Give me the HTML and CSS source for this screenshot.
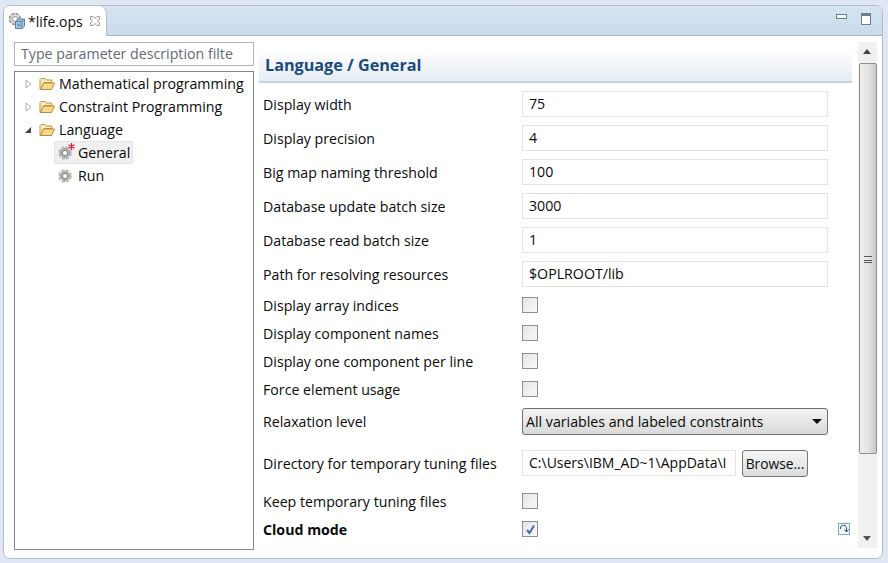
FILE: index.html
```html
<!DOCTYPE html>
<html>
<head>
    <title>life.ops</title>
    <link rel="stylesheet" href="styles.css">
</head>
<body>
    <svg class="defs" width="0" height="0">
        <symbol id="folder" viewBox="0 0 16 14">
            <path d="M1 12.500V2.500L2 1.500H6L7.500 3H12.500L13 4V5.500H5L1.500 12.500Z" fill="#fbeabd" stroke="#c09545"/>
            <path d="M1.500 12.500L4.500 6H15.500L12.500 12.500Z" fill="#f8d88f" stroke="#bd8a35"/>
        </symbol>
        <symbol id="gear" viewBox="0 0 16 16">
            <circle cx="8" cy="8" r="5.900" fill="none" stroke="#b4b4b4" stroke-width="1.600" stroke-dasharray="3.400 1.230"/>
            <circle cx="8" cy="8" r="4.300" fill="#bcbcbc" stroke="#888"/>
            <circle cx="8" cy="8" r="2.600" fill="#fff" stroke="#858585"/>
        </symbol>
        <symbol id="triangle-right" viewBox="0 0 7 10">
            <path d="M1 1L6 5L1 9Z" fill="#fff" stroke="#b0b0b0"/>
        </symbol>
    </svg>

    <div class="window">
        <div class="tabbar">
            <div class="tab">
                <svg class="tab-icon" width="18" height="18" viewBox="0 0 18 18">
                    <circle cx="7" cy="7" r="5.500" fill="#d8d8d8" stroke="#8f8f8f" stroke-width="1.500" stroke-dasharray="3 1.300"/>
                    <circle cx="7" cy="7" r="2.500" fill="#fff" stroke="#999"/>
                    <path d="M7.500 9.500L10 7H16.500V14L14 16.500H7.500Z" fill="#a9c7e4" stroke="#5b7fa6"/>
                    <path d="M7.500 9.500H14V16.500M14 9.500L16.500 7" fill="none" stroke="#5b7fa6"/>
                    <rect x="9.500" y="11.500" width="3" height="3" fill="#6b9ac6"/>
                </svg>
                <span class="tab-title">*life.ops</span>
                <svg class="tab-close" width="12" height="12" viewBox="0 0 12 12">
                    <path d="M1.500 1.500H4L6 3.500L8 1.500H10.500V4L8.500 6L10.500 8V10.500H8L6 8.500L4 10.500H1.500V8L3.500 6L1.500 4Z" fill="#fff" stroke="#9a9a9a"/>
                </svg>
            </div>
            <div class="view-btns">
                <span class="min-btn"></span>
                <span class="max-btn"></span>
            </div>
        </div>

        <div class="content">
            <div class="side">
                <div class="filter">Type parameter description filte</div>
                <div class="tree">
                    <div class="tree-row">
                        <svg class="arrow-open"><use href="#triangle-right"/></svg>
                        <svg class="folder"><use href="#folder"/></svg>
                        <span>Mathematical programming</span>
                    </div>
                    <div class="tree-row">
                        <svg class="arrow-open"><use href="#triangle-right"/></svg>
                        <svg class="folder"><use href="#folder"/></svg>
                        <span>Constraint Programming</span>
                    </div>
                    <div class="tree-row">
                        <span class="arrow-down"></span>
                        <svg class="folder"><use href="#folder"/></svg>
                        <span>Language</span>
                    </div>
                    <div class="tree-row child">
                        <div class="tree-sel">
                            <svg class="gear"><use href="#gear"/></svg>
                            <svg class="star" width="7" height="7" viewBox="0 0 7 7">
                                <path d="M3.500 0V7M0.500 1.800L6.500 5.200M6.500 1.800L0.500 5.200" stroke="#ee1c3c" stroke-width="1.200"/>
                            </svg>
                            <span>General</span>
                        </div>
                    </div>
                    <div class="tree-row child">
                        <div class="tree-item">
                            <svg class="gear"><use href="#gear"/></svg>
                            <span>Run</span>
                        </div>
                    </div>
                </div>
            </div>

            <div class="main">
                <h1 class="section-title">Language / General</h1>
                <div class="form">
                    <div class="row text-row"><label>Display width</label><div class="field">75</div></div>
                    <div class="row text-row"><label>Display precision</label><div class="field">4</div></div>
                    <div class="row text-row"><label>Big map naming threshold</label><div class="field">100</div></div>
                    <div class="row text-row"><label>Database update batch size</label><div class="field">3000</div></div>
                    <div class="row text-row"><label>Database read batch size</label><div class="field">1</div></div>
                    <div class="row text-row"><label>Path for resolving resources</label><div class="field">$OPLROOT/lib</div></div>
                    <div class="row check-row"><label>Display array indices</label><span class="check"></span></div>
                    <div class="row check-row"><label>Display component names</label><span class="check"></span></div>
                    <div class="row check-row"><label>Display one component per line</label><span class="check"></span></div>
                    <div class="row check-row"><label>Force element usage</label><span class="check"></span></div>
                    <div class="row select-row">
                        <label>Relaxation level</label>
                        <div class="select"><span>All variables and labeled constraints</span><span class="select-arrow"></span></div>
                    </div>
                    <div class="row dir-row">
                        <label>Directory for temporary tuning files</label>
                        <div class="field path">C:\Users\IBM_AD~1\AppData\I</div>
                        <div class="browse">Browse...</div>
                    </div>
                    <div class="row check-row"><label>Keep temporary tuning files</label><span class="check"></span></div>
                    <div class="row check-row">
                        <label class="strong">Cloud mode</label>
                        <span class="check">
                            <svg width="13" height="13" viewBox="0 0 13 13"><path d="M3 7L5.500 10L10 2.500" fill="none" stroke="#4a6aa5" stroke-width="2"/></svg>
                        </span>
                        <svg class="restore" width="12" height="12" viewBox="0 0 12 12">
                            <rect x="0.500" y="0.500" width="11" height="11" fill="#f2f8fc" stroke="#7fa3c4"/>
                            <path d="M2.500 6A3 3 0 0 1 8.500 4.500V8.500M6.500 6.500L8.500 9L10.500 6.500" fill="none" stroke="#1f4e79"/>
                        </svg>
                    </div>
                </div>
            </div>

            <div class="scrollbar">
                <span class="scroll-up"></span>
                <div class="thumb"><span class="grip"></span></div>
                <span class="scroll-down"></span>
            </div>
        </div>
    </div>
</body>
</html>
```

FILE: styles.css
```css
html, body {
    margin: 0;
    height: 100%;
}
body {
    width: 888px;
    height: 563px;
    overflow: hidden;
    background: #dfe7f5;
    font-family: "Open Sans", "Noto Sans", sans-serif;
    font-size: 14.2px;
    color: #0a0a0a;
    padding: 5px 5px 4px 3px;
    box-sizing: border-box;
}
.defs {
    position: absolute;
}
.window {
    height: 554px;
    background: #fff;
    border: 1px solid #b4bccd;
    border-radius: 7px;
    box-sizing: border-box;
    display: flex;
    flex-direction: column;
}

/* tab header */
.tabbar {
    height: 29px;
    flex: none;
    display: flex;
    justify-content: space-between;
    background: linear-gradient(#d7e4f1, #c9dbeb);
    border-bottom: 1px solid #a9b6cb;
    border-radius: 6px 6px 0 0;
}
.tab {
    width: 103px;
    height: 30px;
    box-sizing: border-box;
    background: #fff;
    border-right: 1px solid #b4bccd;
    border-radius: 6px 8px 0 0;
    display: flex;
    align-items: center;
    padding-left: 4px;
}
.tab-title {
    margin-left: 2px;
    font-size: 14px;
}
.tab-close {
    margin-left: 6px;
}
.view-btns {
    display: flex;
    align-items: flex-start;
    gap: 14px;
    padding: 7px 11px 0 0;
}
.min-btn {
    width: 9px;
    height: 3px;
    margin-top: 1px;
    background: #fff;
    border: 1px solid #6d7d92;
}
.max-btn {
    width: 8px;
    height: 8px;
    background: #fff;
    border: 1px solid #6d7d92;
    border-top-width: 3px;
}

/* content */
.content {
    flex: 1;
    display: flex;
    min-height: 0;
    padding: 6px 0 0 10px;
}
.side {
    width: 240px;
    flex: none;
    display: flex;
    flex-direction: column;
    gap: 5px;
    height: 508px;
}
.filter {
    height: 24px;
    box-sizing: border-box;
    border: 1px solid #b5b5b5;
    padding-left: 6px;
    line-height: 21px;
    color: #5f6b77;
    white-space: nowrap;
}
.tree {
    flex: 1;
    border: 1px solid #85858f;
}
.tree-row {
    height: 23px;
    display: flex;
    align-items: center;
    white-space: nowrap;
}
.arrow-open {
    width: 7px;
    height: 10px;
    margin: 0 4px 0 10px;
}
.arrow-down {
    width: 0;
    height: 0;
    margin: 0 5px 0 10px;
    border-style: solid;
    border-width: 0 0 6px 6px;
    border-color: transparent transparent #444;
}
.folder {
    width: 16px;
    height: 14px;
    margin: 0 4px 0 3px;
}
.child {
    padding-left: 40px;
}
.tree-sel,
.tree-item {
    display: flex;
    align-items: center;
    height: 21px;
    padding: 0 2px 0 2px;
    position: relative;
}
.tree-sel {
    background: #f0f0f0;
    border: 1px solid #e3e3e3;
    border-radius: 2px;
    margin-left: -1px;
}
.gear {
    width: 16px;
    height: 16px;
    margin-right: 5px;
}
.star {
    position: absolute;
    left: 13px;
    top: 1px;
}

/* form */
.main {
    width: 593px;
    flex: none;
    margin-left: 5px;
}
.section-title {
    margin: 7px 0 0;
    height: 34px;
    box-sizing: border-box;
    padding-left: 6px;
    font-size: 16.2px;
    font-weight: 700;
    line-height: 32px;
    color: #1b4a80;
    background: linear-gradient(#fff, #e5ecf4);
    border-bottom: 2px solid #c6d2e0;
}
.form {
    padding: 4px 0 0 4px;
}
.row {
    display: flex;
    align-items: center;
    position: relative;
}
.row label {
    width: 259px;
    flex: none;
}
.text-row {
    height: 34px;
}
.check-row {
    height: 28px;
}
.select-row {
    height: 36px;
}
.dir-row {
    height: 48px;
}
.field {
    width: 306px;
    height: 26px;
    box-sizing: border-box;
    border: 1px solid #e2e3e5;
    padding-left: 6px;
    line-height: 24px;
}
.field.path {
    width: 214px;
    overflow: hidden;
    white-space: nowrap;
    font-size: 14px;
}
.browse {
    width: 66px;
    height: 27px;
    box-sizing: border-box;
    margin-left: 6px;
    border: 1px solid #777;
    border-radius: 3px;
    background: linear-gradient(#f5f5f5, #dcdcdc);
    text-align: center;
    font-size: 13.8px;
    line-height: 25px;
}
.check {
    width: 14px;
    height: 14px;
    border: 1px solid #8e8f8f;
    background: linear-gradient(135deg, #e4e4e4, #fafafa);
    display: flex;
    align-items: center;
    justify-content: center;
}
.strong {
    font-weight: 700;
}
.restore {
    position: absolute;
    left: 575px;
    top: 8px;
}
.select {
    width: 306px;
    height: 27px;
    box-sizing: border-box;
    border: 1px solid #707070;
    border-radius: 3px;
    background: linear-gradient(#f3f3f3, #d9d9d9);
    display: flex;
    align-items: center;
    justify-content: space-between;
    padding: 0 4px 0 3px;
}
.select-arrow {
    width: 0;
    height: 0;
    margin-right: 1px;
    border-style: solid;
    border-width: 5px 5px 0;
    border-color: #111 transparent transparent;
}

/* scrollbar */
.scrollbar {
    width: 19px;
    height: 506px;
    flex: none;
    margin-left: 6px;
    background: #f1f1f1;
    position: relative;
}
.scroll-up,
.scroll-down {
    position: absolute;
    left: 5px;
    width: 0;
    height: 0;
    border-style: solid;
}
.scroll-up {
    top: 7px;
    border-width: 0 4px 5px;
    border-color: transparent transparent #444;
}
.scroll-down {
    bottom: 7px;
    border-width: 5px 4px 0;
    border-color: #555 transparent transparent;
}
.thumb {
    position: absolute;
    top: 21px;
    left: 1px;
    width: 18px;
    height: 391px;
    box-sizing: border-box;
    border: 1px solid #8f8f8f;
    border-radius: 2px;
    background: linear-gradient(90deg, #eee, #e4e4e4 50%, #c9c9c9);
    display: flex;
    align-items: center;
    justify-content: center;
}
.grip {
    width: 8px;
    height: 3px;
    border-top: 1px solid #555;
    border-bottom: 1px solid #555;
    position: relative;
    margin-top: -1px;
}
.grip::after {
    content: "";
    position: absolute;
    left: 0;
    top: 5px;
    width: 8px;
    height: 1px;
    background: #555;
}
```
